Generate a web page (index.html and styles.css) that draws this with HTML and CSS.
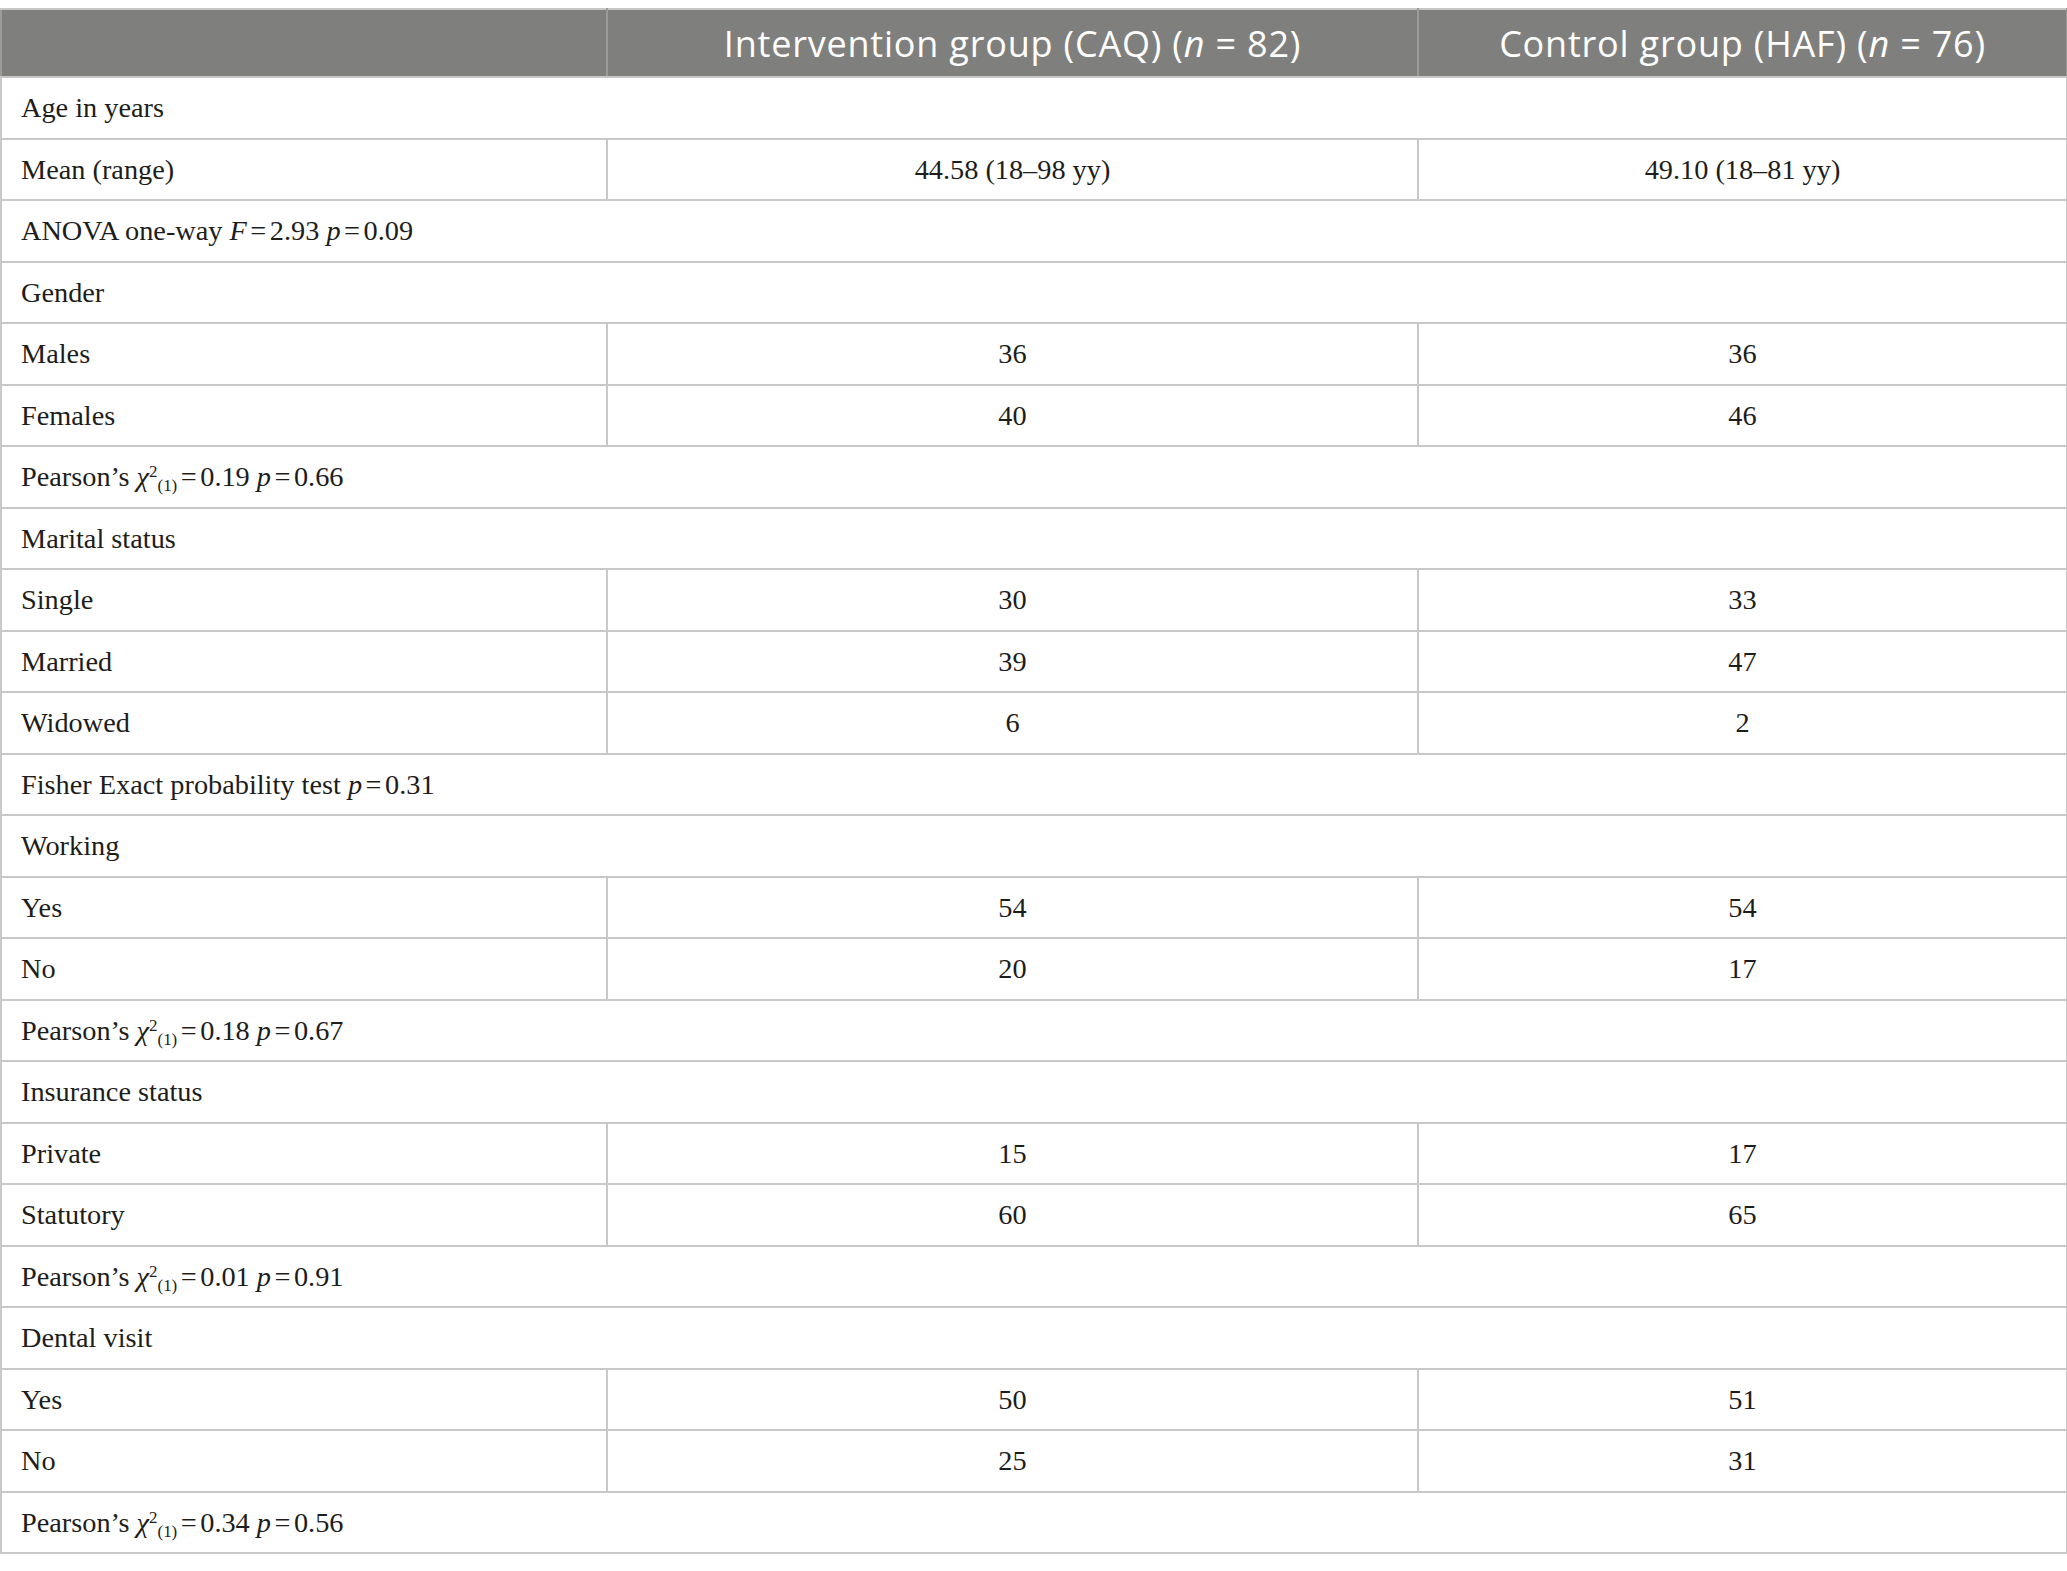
FILE: index.html
```html
<!DOCTYPE html>
<html lang="en">
<head>
<meta charset="utf-8">
<title>Table</title>
<link rel="stylesheet" href="styles.css">
</head>
<body>
<table class="data">
  <colgroup>
    <col class="c1">
    <col class="c2">
    <col class="c3">
  </colgroup>
  <thead>
    <tr>
      <th></th>
      <th>Intervention group (CAQ) (<i>n</i> = 82)</th>
      <th>Control group (HAF) (<i>n</i> = 76)</th>
    </tr>
  </thead>
  <tbody>
    <tr><td colspan="3">Age in years</td></tr>
    <tr><td>Mean (range)</td><td class="num">44.58 (18–98 yy)</td><td class="num">49.10 (18–81 yy)</td></tr>
    <tr><td colspan="3">ANOVA one-way <i>F</i><span class="eq">=</span>2.93 <i>p</i><span class="eq">=</span>0.09</td></tr>
    <tr><td colspan="3">Gender</td></tr>
    <tr><td>Males</td><td class="num">36</td><td class="num">36</td></tr>
    <tr><td>Females</td><td class="num">40</td><td class="num">46</td></tr>
    <tr><td colspan="3">Pearson’s <i>χ</i><sup>2</sup><sub>(1)</sub><span class="eq">=</span>0.19 <i>p</i><span class="eq">=</span>0.66</td></tr>
    <tr><td colspan="3">Marital status</td></tr>
    <tr><td>Single</td><td class="num">30</td><td class="num">33</td></tr>
    <tr><td>Married</td><td class="num">39</td><td class="num">47</td></tr>
    <tr><td>Widowed</td><td class="num">6</td><td class="num">2</td></tr>
    <tr><td colspan="3">Fisher Exact probability test <i>p</i><span class="eq">=</span>0.31</td></tr>
    <tr><td colspan="3">Working</td></tr>
    <tr><td>Yes</td><td class="num">54</td><td class="num">54</td></tr>
    <tr><td>No</td><td class="num">20</td><td class="num">17</td></tr>
    <tr><td colspan="3">Pearson’s <i>χ</i><sup>2</sup><sub>(1)</sub><span class="eq">=</span>0.18 <i>p</i><span class="eq">=</span>0.67</td></tr>
    <tr><td colspan="3">Insurance status</td></tr>
    <tr><td>Private</td><td class="num">15</td><td class="num">17</td></tr>
    <tr><td>Statutory</td><td class="num">60</td><td class="num">65</td></tr>
    <tr><td colspan="3">Pearson’s <i>χ</i><sup>2</sup><sub>(1)</sub><span class="eq">=</span>0.01 <i>p</i><span class="eq">=</span>0.91</td></tr>
    <tr><td colspan="3">Dental visit</td></tr>
    <tr><td>Yes</td><td class="num">50</td><td class="num">51</td></tr>
    <tr><td>No</td><td class="num">25</td><td class="num">31</td></tr>
    <tr><td colspan="3">Pearson’s <i>χ</i><sup>2</sup><sub>(1)</sub><span class="eq">=</span>0.34 <i>p</i><span class="eq">=</span>0.56</td></tr>
  </tbody>
</table>
</body>
</html>
```

FILE: styles.css
```css
html, body {
  margin: 0;
  padding: 0;
  background: #ffffff;
}

body {
  padding-top: 8px;
}

.data {
  width: 2066px;
  border-collapse: collapse;
  table-layout: fixed;
  font-family: "Liberation Serif", "Times New Roman", serif;
  color: #1d1d1b;
}

.c1 { width: 606px; }
.c2 { width: 811px; }
.c3 { width: 649px; }

.data th {
  height: 64px;
  padding: 2px 10px 0;
  background: #7f807e;
  color: #ffffff;
  font-family: "Open Sans", "Noto Sans", sans-serif;
  font-weight: 400;
  font-size: 36px;
  letter-spacing: 0.8px;
  line-height: 1;
  text-align: center;
  vertical-align: middle;
  border: 2px solid #9b9c9a;
  border-top-color: #c8c8c8;
  border-bottom-color: #c8c8c8;
}

.data td {
  height: 58.5px;
  padding: 1px 0 0 19px;
  font-size: 28.3px;
  line-height: 1;
  vertical-align: middle;
  border: 2px solid #c8c8c8;
  white-space: nowrap;
}

.data td.num {
  text-align: center;
  padding: 1px 0 0;
}

.data i {
  font-style: italic;
}

.eq {
  margin: 0 3.5px;
}

.data sup,
.data sub {
  font-size: 60%;
  line-height: 0;
}

.data sup {
  vertical-align: 0.55em;
}

.data sub {
  vertical-align: -0.3em;
}
```
